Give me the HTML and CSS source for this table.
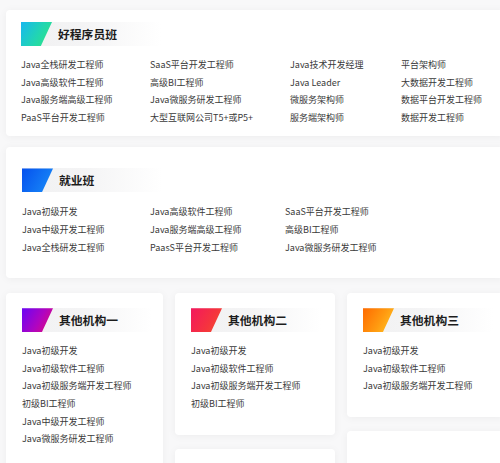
FILE: index.html
```html
<!DOCTYPE html>
<html lang="zh">
<head>
<meta charset="utf-8">
<link rel="stylesheet" href="styles.css">
</head>
<body>
<div class="page">
  <section class="card card-top">
    <div class="head">
      <span class="badge g-cyan"></span>
      <h2 class="title">好程序员班</h2>
    </div>
    <div class="list cols-a">
      <span>Java全栈研发工程师</span><span>SaaS平台开发工程师</span><span>Java技术开发经理</span><span>平台架构师</span>
      <span>Java高级软件工程师</span><span>高级BI工程师</span><span>Java Leader</span><span>大数据开发工程师</span>
      <span>Java服务端高级工程师</span><span>Java微服务研发工程师</span><span>微服务架构师</span><span>数据平台开发工程师</span>
      <span>PaaS平台开发工程师</span><span>大型互联网公司T5+或P5+</span><span>服务端架构师</span><span>数据开发工程师</span>
    </div>
  </section>

  <section class="card card-mid">
    <div class="head">
      <span class="badge g-blue"></span>
      <h2 class="title">就业班</h2>
    </div>
    <div class="list cols-b">
      <span>Java初级开发</span><span>Java高级软件工程师</span><span>SaaS平台开发工程师</span>
      <span>Java中级开发工程师</span><span>Java服务端高级工程师</span><span>高级BI工程师</span>
      <span>Java全栈研发工程师</span><span>PaasS平台开发工程师</span><span>Java微服务研发工程师</span>
    </div>
  </section>

  <div class="others">
    <div class="col">
      <section class="card card-sm">
        <div class="head">
          <span class="badge g-purple"></span>
          <h2 class="title">其他机构一</h2>
        </div>
        <div class="list single">
          <span>Java初级开发</span>
          <span>Java初级软件工程师</span>
          <span>Java初级服务端开发工程师</span>
          <span>初级BI工程师</span>
          <span>Java中级开发工程师</span>
          <span>Java微服务研发工程师</span>
        </div>
      </section>
    </div>
    <div class="col">
      <section class="card card-sm">
        <div class="head">
          <span class="badge g-red"></span>
          <h2 class="title">其他机构二</h2>
        </div>
        <div class="list single">
          <span>Java初级开发</span>
          <span>Java初级软件工程师</span>
          <span>Java初级服务端开发工程师</span>
          <span>初级BI工程师</span>
        </div>
      </section>
      <section class="card card-sm empty"></section>
    </div>
    <div class="col">
      <section class="card card-sm">
        <div class="head">
          <span class="badge g-orange"></span>
          <h2 class="title">其他机构三</h2>
        </div>
        <div class="list single">
          <span>Java初级开发</span>
          <span>Java初级软件工程师</span>
          <span>Java初级服务端开发工程师</span>
        </div>
      </section>
      <section class="card card-sm empty"></section>
    </div>
  </div>
</div>
</body>
</html>
```

FILE: styles.css
```css
html, body {
  margin: 0;
  padding: 0;
  overflow: hidden;
  background: #f8f8f9;
}
body {
  width: 500px;
  height: 463px;
  font-family: "Noto Sans CJK SC", "Noto Sans", sans-serif;
  color: #333;
}
.page {
  width: 498px;
  padding: 10px 0 0 6px;
  display: flex;
  flex-direction: column;
}
.card {
  background: #fff;
  border-radius: 4px;
  box-shadow: 0 1px 8px rgba(0, 0, 0, 0.05);
  box-sizing: border-box;
}
.card-top {
  padding: 12px 15px 10px 15px;
}
.card-mid {
  margin-top: 11px;
  padding: 21px 16px 22px 16px;
}
.head {
  display: flex;
  align-items: center;
  height: 24px;
  background: linear-gradient(90deg, #f1f1f2 0%, #f4f4f5 45%, rgba(255,255,255,0) 100%);
  width: 140px;
}
.badge {
  width: 31px;
  height: 24px;
  flex: none;
  clip-path: polygon(0 0, 100% 0, 64% 100%, 0 100%);
}
.g-cyan { background: linear-gradient(120deg, #17b8f0 0%, #22d6b0 55%, #2fe67a 100%); }
.g-blue { background: linear-gradient(120deg, #0550ee 0%, #1a8ef8 100%); }
.g-purple { background: linear-gradient(120deg, #6a05f5 0%, #b005c0 55%, #e80c6e 100%); }
.g-red { background: linear-gradient(120deg, #f3185e 0%, #f5343e 60%, #f3522c 100%); }
.g-orange { background: linear-gradient(120deg, #ff6a00 0%, #ff9a10 55%, #ffc928 100%); }
.title {
  margin: 0 0 0 6px;
  font-size: 11.8px;
  font-weight: 700;
  color: #1c1c1c;
  line-height: 24px;
  white-space: nowrap;
}
.list {
  display: grid;
  margin-top: 9px;
  font-size: 9px;
  line-height: 17.6px;
  color: #3a3a3a;
  white-space: nowrap;
}
.cols-a {
  grid-template-columns: 129px 140px 111px auto;
  margin-top: 10px;
}
.cols-b {
  grid-template-columns: 128px 135px auto;
  margin-top: 11px;
}
.single {
  grid-template-columns: 1fr;
}
.others {
  display: flex;
  gap: 12px;
  margin-top: 15px;
}
.col {
  display: flex;
  flex-direction: column;
  gap: 14px;
}
.col:nth-child(1) { width: 157px; }
.col:nth-child(2) { width: 160px; }
.col:nth-child(3) { width: 157px; }
.card-sm {
  padding: 15px 15px 22px 16px;
}
.card-sm .head {
  width: 130px;
}
.card-sm .list {
  margin-top: 10px;
}
.empty {
  height: 60px;
}
```
